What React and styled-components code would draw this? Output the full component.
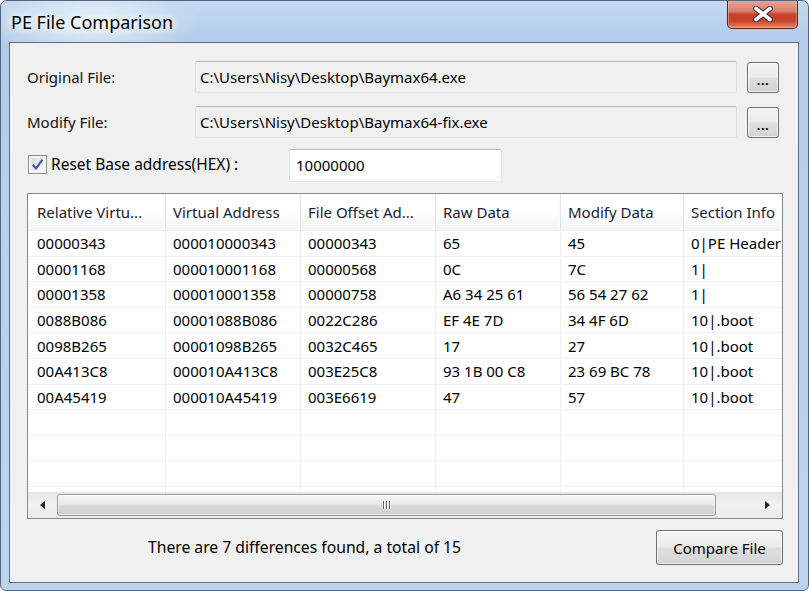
import React from 'react';
import styled, { createGlobalStyle } from 'styled-components';

const Global = createGlobalStyle`
  html, body { margin: 0; padding: 0; background: #ffffff; }
  body { font-family: "Noto Sans", "Open Sans", sans-serif; }
  * { box-sizing: border-box; }
`;

const Window = styled.div`
  width: 809px;
  height: 591px;
  border: 1px solid #56667a;
  border-radius: 7px 7px 6px 6px;
  background:
    radial-gradient(ellipse 110px 34px at 90px 22px, rgba(255,255,255,0.75), rgba(255,255,255,0) 100%),
    linear-gradient(180deg, #c3daf1 0%, #b3cdea 6%, #b7d0eb 40%, #bcd4ed 100%);
  display: flex;
  flex-direction: column;
  padding: 0 9px 7px 8px;
  overflow: hidden;
`;

const TitleBar = styled.div`
  height: 41px;
  margin: 0 -9px 0 -8px;
  padding: 0 10px 0 10px;
  display: flex;
  align-items: center;
  justify-content: space-between;
`;

const TitleText = styled.div`
  font-size: 18px;
  color: #000;
  text-shadow: 0 0 8px #fff, 0 0 8px #fff;
  margin-top: 1px;
`;

const CloseButton = styled.div`
  align-self: flex-start;
  margin-top: -1px;
  width: 71px;
  height: 29px;
  border: 1px solid #5b2018;
  border-top: none;
  border-radius: 0 0 5px 5px;
  background: linear-gradient(180deg, #e9a899 0%, #dc7f6c 40%, #c8412b 52%, #c9432c 75%, #e08b6d 100%);
  box-shadow: inset 0 0 0 1px rgba(255, 200, 190, 0.45);
  display: flex;
  align-items: center;
  justify-content: center;
`;

const Client = styled.div`
  flex: 1;
  border: 1px solid #5c6d80;
  background: #f0f0f0;
  display: flex;
  flex-direction: column;
  padding: 18px 15px 0 17px;
`;

const FileRow = styled.div`
  display: grid;
  grid-template-columns: 158px 542px 32px;
  column-gap: 10px;
  height: 32px;
  align-items: center;
  margin-top: ${(p) => p.$top || 0}px;
`;

const Label = styled.div`
  font-size: 15px;
  color: #111;
  white-space: nowrap;
`;

const Field = styled.div`
  height: ${(p) => p.$h || 32}px;
  width: ${(p) => (p.$w ? p.$w + 'px' : 'auto')};
  border: 1px solid;
  border-color: #b5b7bd #dcdfe5 #e3e7ec #dcdfe5;
  border-radius: 2px;
  background: ${(p) => (p.$white ? '#ffffff' : '#f0f0f0')};
  font-size: 15px;
  color: #000;
  padding-left: ${(p) => p.$pad || 4}px;
  display: flex;
  align-items: center;
  white-space: nowrap;
  overflow: hidden;
`;

const Button = styled.div`
  width: ${(p) => p.$w}px;
  height: ${(p) => p.$h}px;
  border: 1px solid #707070;
  border-radius: 3px;
  background: linear-gradient(180deg, #f3f3f3 0%, #ececec 48%, #dfdfdf 52%, #d3d3d3 100%);
  box-shadow: inset 0 0 0 1px rgba(255,255,255,0.7);
  font-size: 15px;
  color: #000;
  display: flex;
  align-items: center;
  justify-content: center;
  white-space: nowrap;
`;

const Dots = styled.span`
  font-size: 13px;
  font-weight: 700;
  letter-spacing: 0.5px;
  margin-top: 5px;
`;

const CheckRow = styled.div`
  display: flex;
  align-items: center;
  height: 32px;
  margin-top: 11px;
`;

const CheckBox = styled.div`
  width: 19px;
  height: 19px;
  margin-left: 1px;
  margin-top: -2px;
  border: 1px solid #8f8f8f;
  background: linear-gradient(135deg, #d8dbe0 0%, #f1f2f4 70%, #fafafa 100%);
  box-shadow: inset 0 0 0 2px #f4f4f4;
  display: flex;
  align-items: center;
  justify-content: center;
`;

const CheckLabel = styled.div`
  font-size: 15.5px;
  color: #000;
  margin-left: 4px;
  width: 238px;
  margin-top: -2px;
`;

const Table = styled.div`
  margin-top: 12px;
  width: 756px;
  height: 326px;
  border: 1px solid #828790;
  background: #fff;
  display: flex;
  flex-direction: column;
  overflow: hidden;
`;

const COLS = '138px 135px 135px 125px 123px 150px';

const HeaderRow = styled.div`
  display: grid;
  grid-template-columns: ${COLS};
  height: 37px;
  flex: none;
  background: linear-gradient(180deg, #ffffff 0%, #ffffff 45%, #f3f4f6 100%);
  border-bottom: 1px solid #eef0f3;
`;

const HeadCell = styled.div`
  font-size: 15px;
  color: #1b2230;
  display: flex;
  align-items: center;
  padding-left: ${(p) => (p.$first ? 9 : 7)}px;
  border-right: 1px solid #e2e6ec;
  box-shadow: inset -2px 0 0 #fbfbfc;
  white-space: nowrap;
  overflow: hidden;
`;

const Body = styled.div`
  flex: 1;
  overflow: hidden;
`;

const Row = styled.div`
  display: grid;
  grid-template-columns: ${COLS};
  height: 25.6px;
`;

const Cell = styled.div`
  font-size: 15px;
  color: #000;
  display: flex;
  align-items: center;
  padding-left: ${(p) => (p.$first ? 9 : 7)}px;
  border-right: 1px solid #efefef;
  border-bottom: 1px solid #efefef;
  white-space: nowrap;
  overflow: hidden;
`;

const ScrollBar = styled.div`
  height: 26px;
  flex: none;
  display: flex;
  align-items: center;
  background: linear-gradient(180deg, #e6e6e6 0%, #f1f1f1 50%, #ebebeb 100%);
`;

const ArrowBox = styled.div`
  width: ${(p) => p.$w}px;
  height: 100%;
  display: flex;
  align-items: center;
  justify-content: center;
  flex: none;
`;

const Thumb = styled.div`
  width: ${(p) => p.$w}px;
  height: 22px;
  flex: none;
  border: 1px solid #9a9a9a;
  border-radius: 3px;
  background: linear-gradient(180deg, #f5f5f5 0%, #e9e9e9 45%, #d9d9d9 55%, #cfcfcf 100%);
  box-shadow: inset 0 0 0 1px rgba(255,255,255,0.6);
  display: flex;
  align-items: center;
  justify-content: center;
  gap: 2px;
`;

const Grip = styled.div`
  width: 1px;
  height: 8px;
  background: #6a6a6a;
  box-shadow: 1px 0 0 #fafafa;
`;

const Spacer = styled.div`
  flex: 1;
`;

const StatusRow = styled.div`
  margin-top: 11px;
  width: 756px;
  display: flex;
  align-items: center;
  justify-content: space-between;
`;

const StatusText = styled.div`
  font-size: 15.7px;
  color: #000;
  padding-left: 121px;
  margin-top: -2px;
`;

const headers = ['Relative Virtu...', 'Virtual Address', 'File Offset Ad...', 'Raw Data', 'Modify Data', 'Section Info'];

const rows = [
  ['00000343', '000010000343', '00000343', '65', '45', '0|PE Header'],
  ['00001168', '000010001168', '00000568', '0C', '7C', '1|'],
  ['00001358', '000010001358', '00000758', 'A6 34 25 61', '56 54 27 62', '1|'],
  ['0088B086', '00001088B086', '0022C286', 'EF 4E 7D', '34 4F 6D', '10|.boot'],
  ['0098B265', '00001098B265', '0032C465', '17', '27', '10|.boot'],
  ['00A413C8', '000010A413C8', '003E25C8', '93 1B 00 C8', '23 69 BC 78', '10|.boot'],
  ['00A45419', '000010A45419', '003E6619', '47', '57', '10|.boot'],
];

const EMPTY = 4;

export default function App() {
  return (
    <>
      <Global />
      <Window>
        <TitleBar>
          <TitleText>PE File Comparison</TitleText>
          <CloseButton>
            <svg width="22" height="16" viewBox="0 0 22 16">
              <path d="M4 2.5 L18 13.5 M18 2.5 L4 13.5" stroke="#3a3a3a" strokeWidth="6" strokeLinecap="round" fill="none" />
              <path d="M4 2.5 L18 13.5 M18 2.5 L4 13.5" stroke="#ffffff" strokeWidth="3.6" strokeLinecap="round" fill="none" />
            </svg>
          </CloseButton>
        </TitleBar>
        <Client>
          <FileRow>
            <Label>Original File:</Label>
            <Field>C:\Users\Nisy\Desktop\Baymax64.exe</Field>
            <Button $w={32} $h={31}><Dots>...</Dots></Button>
          </FileRow>
          <FileRow $top={13}>
            <Label>Modify File:</Label>
            <Field>C:\Users\Nisy\Desktop\Baymax64-fix.exe</Field>
            <Button $w={32} $h={31}><Dots>...</Dots></Button>
          </FileRow>
          <CheckRow>
            <CheckBox>
              <svg width="13" height="13" viewBox="0 0 13 13">
                <path d="M1.8 6.8 L5 10.6 L11.4 1.6" stroke="#4a5f95" strokeWidth="2.3" fill="none" strokeLinejoin="round" />
              </svg>
            </CheckBox>
            <CheckLabel>Reset Base address(HEX) :</CheckLabel>
            <Field $white $w={213} $h={33} $pad={6}>10000000</Field>
          </CheckRow>
          <Table>
            <HeaderRow>
              {headers.map((h, i) => (
                <HeadCell key={h} $first={i === 0}>{h}</HeadCell>
              ))}
            </HeaderRow>
            <Body>
              {rows.map((r, ri) => (
                <Row key={ri}>
                  {r.map((c, ci) => (
                    <Cell key={ci} $first={ci === 0}>{c}</Cell>
                  ))}
                </Row>
              ))}
              {Array.from({ length: EMPTY }).map((_, ri) => (
                <Row key={'e' + ri}>
                  {headers.map((h, ci) => (
                    <Cell key={ci} $first={ci === 0} />
                  ))}
                </Row>
              ))}
            </Body>
            <ScrollBar>
              <ArrowBox $w={29}>
                <svg width="5" height="8" viewBox="0 0 5 8"><path d="M5 0 L0 4 L5 8 Z" fill="#222" /></svg>
              </ArrowBox>
              <Thumb $w={659}>
                <Grip /><Grip /><Grip />
              </Thumb>
              <Spacer />
              <ArrowBox $w={30}>
                <svg width="5" height="8" viewBox="0 0 5 8"><path d="M0 0 L5 4 L0 8 Z" fill="#222" /></svg>
              </ArrowBox>
            </ScrollBar>
          </Table>
          <StatusRow>
            <StatusText>There are 7 differences found, a total of 15</StatusText>
            <Button $w={127} $h={35}>Compare File</Button>
          </StatusRow>
        </Client>
      </Window>
    </>
  );
}
